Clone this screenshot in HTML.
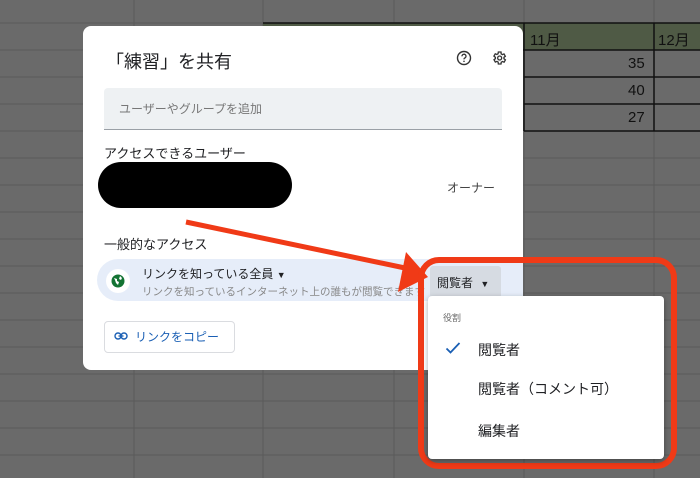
<!DOCTYPE html>
<html><head><meta charset="utf-8"><style>
body{margin:0;width:700px;height:478px;overflow:hidden;background:#6a6a6a;position:relative;font-family:"Liberation Sans","Noto Sans CJK JP",sans-serif}
.a{position:absolute}
.t{position:absolute;white-space:nowrap}
</style></head><body>
<svg class="a" style="left:0;top:0" width="700" height="478">
<g stroke="#5a5a5a" stroke-width="1">
<line x1="134" y1="0" x2="134" y2="478"/><line x1="263" y1="0" x2="263" y2="478"/><line x1="394" y1="0" x2="394" y2="478"/><line x1="524" y1="0" x2="524" y2="478"/><line x1="654" y1="0" x2="654" y2="478"/>
<line x1="0" y1="23" x2="700" y2="23"/><line x1="0" y1="50" x2="700" y2="50"/><line x1="0" y1="77" x2="700" y2="77"/><line x1="0" y1="104" x2="700" y2="104"/><line x1="0" y1="131" x2="700" y2="131"/><line x1="0" y1="158" x2="700" y2="158"/><line x1="0" y1="185" x2="700" y2="185"/><line x1="0" y1="212" x2="700" y2="212"/><line x1="0" y1="239" x2="700" y2="239"/><line x1="0" y1="266" x2="700" y2="266"/><line x1="0" y1="293" x2="700" y2="293"/><line x1="0" y1="320" x2="700" y2="320"/><line x1="0" y1="347" x2="700" y2="347"/><line x1="0" y1="374" x2="700" y2="374"/><line x1="0" y1="401" x2="700" y2="401"/><line x1="0" y1="428" x2="700" y2="428"/><line x1="0" y1="455" x2="700" y2="455"/>
</g>
<rect x="263" y="23" width="437" height="27" fill="#4f5a45"/>
<g stroke="#111" stroke-width="1.5" fill="none">
<line x1="263" y1="23" x2="700" y2="23"/><line x1="263" y1="50" x2="700" y2="50"/><line x1="524" y1="77" x2="700" y2="77"/><line x1="524" y1="104" x2="700" y2="104"/><line x1="524" y1="131" x2="700" y2="131"/>
<line x1="524" y1="23" x2="524" y2="131"/><line x1="654" y1="23" x2="654" y2="131"/>
</g>
</svg>
<div class="t" style="left:530px;top:29px;font-size:15px;color:#111">11月</div>
<div class="t" style="left:658px;top:29px;font-size:15px;color:#111">12月</div>
<div class="t" style="left:628px;top:55px;font-size:15px;color:#111">35</div>
<div class="t" style="left:628px;top:82px;font-size:15px;color:#111">40</div>
<div class="t" style="left:628px;top:109px;font-size:15px;color:#111">27</div>

<div class="a" style="left:83px;top:26px;width:440px;height:344px;background:#fff;border-radius:8px"></div>
<div class="t" style="left:106px;top:48px;font-size:18px;color:#202124">「練習」を共有</div>
<svg class="a" style="left:456px;top:50px" width="16" height="16" viewBox="0 0 16 16"><circle cx="8" cy="8" r="6.5" fill="none" stroke="#333" stroke-width="1.4"/><path d="M6 6.3a2 2 0 1 1 2.6 1.8c-.5.3-.6.6-.6 1.3" fill="none" stroke="#333" stroke-width="1.3"/><circle cx="8" cy="11.3" r=".8" fill="#333"/></svg>
<svg class="a" style="left:491px;top:50px" width="16" height="16" viewBox="0 0 24 24"><path d="M19.4 13a7.5 7.5 0 0 0 0-2l2.1-1.6-2-3.5-2.5 1a7 7 0 0 0-1.7-1L15 3h-4l-.4 2.7a7 7 0 0 0-1.7 1l-2.5-1-2 3.5L6.6 11a7.5 7.5 0 0 0 0 2l-2.1 1.6 2 3.5 2.5-1a7 7 0 0 0 1.7 1L11 21h4l.4-2.7a7 7 0 0 0 1.7-1l2.5 1 2-3.5z" fill="none" stroke="#333" stroke-width="2"/><circle cx="13" cy="12" r="3" fill="none" stroke="#333" stroke-width="2"/></svg>
<div class="a" style="left:104px;top:88px;width:398px;height:41px;background:#eef1f3;border-radius:4px 4px 0 0;border-bottom:1.5px solid #9aa0a6"></div>
<div class="t" style="left:119px;top:100px;font-size:12px;color:#777">ユーザーやグループを追加</div>
<div class="t" style="left:104px;top:143px;font-size:13px;color:#202124">アクセスできるユーザー</div>
<div class="a" style="left:98px;top:162px;width:194px;height:46px;background:#000;border-radius:23px"></div>
<div class="t" style="left:447px;top:179px;font-size:12px;color:#444">オーナー</div>
<div class="t" style="left:104px;top:234px;font-size:13px;color:#202124">一般的なアクセス</div>
<div class="a" style="left:97px;top:259px;width:426px;height:42px;background:#e6edf9;border-radius:21px 0 0 21px"></div>
<div class="a" style="left:106px;top:269px;width:24px;height:24px;background:#fff;border-radius:12px"></div>
<svg class="a" style="left:111px;top:274px" width="14" height="14" viewBox="0 0 14 14"><circle cx="7" cy="7" r="6.5" fill="#137333"/><path d="M3 4l3 1 0 2 2 1-1 3-2-2-1-3zM9 2l2 2-1 2-2-1z" fill="#fff"/></svg>
<div class="t" style="left:142px;top:265px;font-size:12px;color:#202124">リンクを知っている全員 <span style="font-size:9px">▼</span></div>
<div class="t" style="left:142px;top:284px;font-size:10.5px;color:#888;width:285px;overflow:hidden">リンクを知っているインターネット上の誰もが閲覧できます</div>
<div class="a" style="left:430px;top:266px;width:71px;height:32px;background:#d6dbe2;border-radius:3px"></div>
<div class="t" style="left:437px;top:274px;font-size:12px;color:#202124">閲覧者 <span style="font-size:9px;margin-left:4px">▼</span></div>
<div class="a" style="left:104px;top:321px;width:129px;height:30px;border:1px solid #dadce0;border-radius:4px"></div>
<svg class="a" style="left:114px;top:330px" width="14" height="12" viewBox="0 0 14 12"><rect x="1" y="3" width="6" height="6" rx="3" fill="none" stroke="#1a5fb4" stroke-width="1.4"/><rect x="7" y="3" width="6" height="6" rx="3" fill="none" stroke="#1a5fb4" stroke-width="1.4"/><line x1="4.5" y1="6" x2="9.5" y2="6" stroke="#1a5fb4" stroke-width="1.4"/></svg>
<div class="t" style="left:135px;top:328px;font-size:12px;color:#1a5fb4">リンクをコピー</div>

<svg class="a" style="left:0;top:0" width="700" height="478">
<line x1="186" y1="222" x2="405" y2="268" stroke="#f03a17" stroke-width="5"/>
<polygon points="428,277 398,292 406,252" fill="#f03a17"/>
<rect x="421" y="260" width="253" height="206" rx="18" fill="none" stroke="#f03a17" stroke-width="6"/>
</svg>
<div class="a" style="left:428px;top:296px;width:236px;height:163px;background:#fff;border-radius:4px;box-shadow:0 2px 6px rgba(0,0,0,.35)"></div>
<div class="t" style="left:443px;top:311px;font-size:9px;color:#666">役割</div>
<svg class="a" style="left:445px;top:341px" width="16" height="14" viewBox="0 0 16 14"><path d="M1.5 7.5l4 4L14.5 2" fill="none" stroke="#1a5fb4" stroke-width="1.8"/></svg>
<div class="t" style="left:478px;top:340px;font-size:14px;color:#202124">閲覧者</div>
<div class="t" style="left:478px;top:379px;font-size:14px;color:#202124">閲覧者（コメント可）</div>
<div class="t" style="left:478px;top:421px;font-size:14px;color:#202124">編集者</div>
</body></html>
